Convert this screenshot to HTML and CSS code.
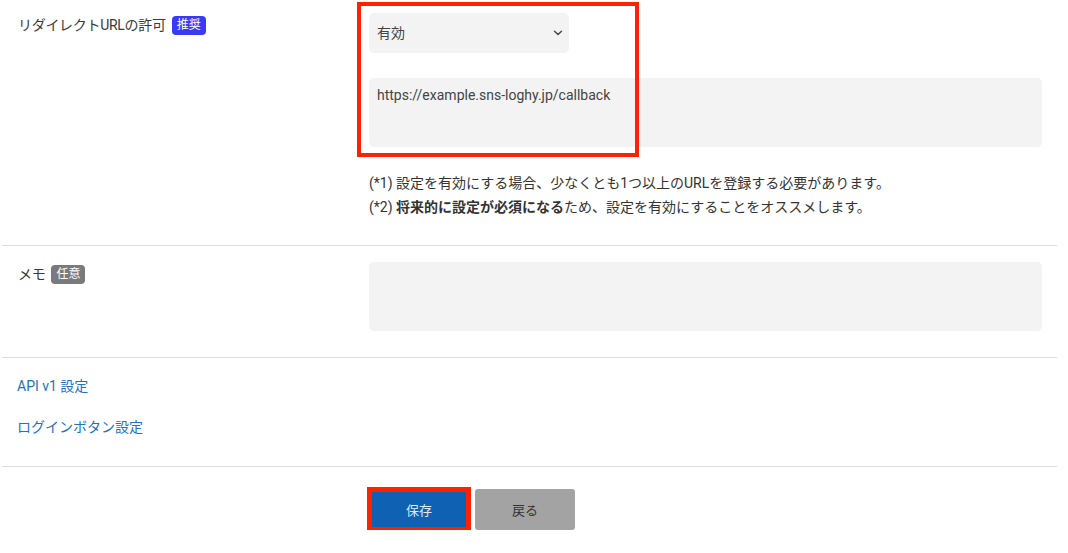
FILE: index.html
```html
<!DOCTYPE html>
<html lang="ja">
<head>
<meta charset="utf-8">
<title>設定</title>
<link rel="stylesheet" href="styles.css">
</head>
<body>
<div class="form">
  <div class="row row-redirect">
    <div class="label"><span class="label-text">リダイレクトURLの許可</span><span class="badge badge-rec">推奨</span></div>
    <div class="control">
      <div class="select"><span>有効</span>
        <svg class="chev" width="10" height="6" viewBox="0 0 10 6"><path d="M1.5 1.2 L5 4.6 L8.5 1.2" fill="none" stroke="#444" stroke-width="1.4" stroke-linecap="round" stroke-linejoin="round"/></svg>
      </div>
      <div class="textarea ta-url">https://example.sns-loghy.jp/callback</div>
      <div class="notes">
        <p>(*1) 設定を有効にする場合、少なくとも1つ以上のURLを登録する必要があります。</p>
        <p>(*2) <b>将来的に設定が必須になる</b>ため、設定を有効にすることをオススメします。</p>
      </div>
    </div>
    <div class="highlight"></div>
  </div>
  <div class="row row-memo">
    <div class="label"><span class="label-text">メモ</span><span class="badge badge-opt">任意</span></div>
    <div class="control">
      <div class="textarea ta-memo"></div>
    </div>
  </div>
  <div class="row row-links">
    <a class="link" href="#">API v1 設定</a>
    <a class="link" href="#">ログインボタン設定</a>
  </div>
  <div class="actions">
    <button class="btn btn-save">保存</button>
    <button class="btn btn-back">戻る</button>
  </div>
</div>
</body>
</html>
```

FILE: styles.css
```css
* { box-sizing: border-box; }
html, body { margin: 0; padding: 0; background: #fff; }
body {
  font-family: "Roboto", "Noto Sans CJK JP", sans-serif;
  font-size: 14px;
  color: #333;
}
.form {
  margin-left: 2px;
  width: 1055px;
}
.row {
  display: grid;
  grid-template-columns: 367px 1fr;
  padding-right: 15px;
  border-bottom: 1px solid #dedede;
  position: relative;
}
.row-redirect { padding-top: 13px; padding-bottom: 26px; }
.row-memo { padding-top: 16px; padding-bottom: 26px; }
.label {
  padding-left: 16px;
  padding-top: 2px;
  line-height: 20px;
  display: flex;
  align-items: center;
  align-self: start;
  height: 22px;
}
.label-text { letter-spacing: -0.3px; color: #3a3a3a; }
.badge {
  display: inline-block;
  margin-left: 6px;
  padding: 0 5px;
  font-size: 12px;
  line-height: 19px;
  border-radius: 4px;
  color: #fff;
  font-weight: 400;
}
.badge-rec { background: #3a3af2; }
.badge-opt { background: #7a7a7a; }
.control { display: flex; flex-direction: column; }
.select {
  width: 200px;
  height: 40px;
  background: #f3f3f3;
  border-radius: 5px;
  display: flex;
  align-items: center;
  justify-content: space-between;
  padding: 0 4px 2px 8px;
  color: #444;
}
.chev { margin-right: 2px; margin-top: 2px; }
.textarea {
  background: #f3f3f3;
  border-radius: 5px;
  height: 69px;
  padding: 8px 8px;
  line-height: 18px;
  color: #444;
}
.ta-url { margin-top: 25px; }
.notes { margin-top: 24px; }
.notes p { margin: 0; line-height: 24px; color: #333; }
.notes b { font-weight: 700; }
.highlight {
  position: absolute;
  left: 355px;
  top: 2px;
  width: 282px;
  height: 155px;
  border: 4px solid #ff2200;
}
.row-links {
  display: flex;
  flex-direction: column;
  gap: 21px;
  padding: 18px 0 29px 15px;
}
.link {
  color: #2272c3;
  text-decoration: none;
  line-height: 20px;
  align-self: flex-start;
}
.actions {
  display: flex;
  gap: 6px;
  padding: 22px 0 0 367px;
}
.btn {
  width: 100px;
  height: 41px;
  border: none;
  border-radius: 3px;
  font-family: "Roboto", "Noto Sans CJK JP", sans-serif;
  font-size: 13px;
}
.btn-save {
  background: #0f61b4;
  color: #dfe8f3;
  border-radius: 0;
  box-shadow: 0 0 0 2px #ff2200, inset 0 0 0 3px #ff2200;
}
.btn-back {
  background: #a3a3a3;
  color: #333;
}
```
